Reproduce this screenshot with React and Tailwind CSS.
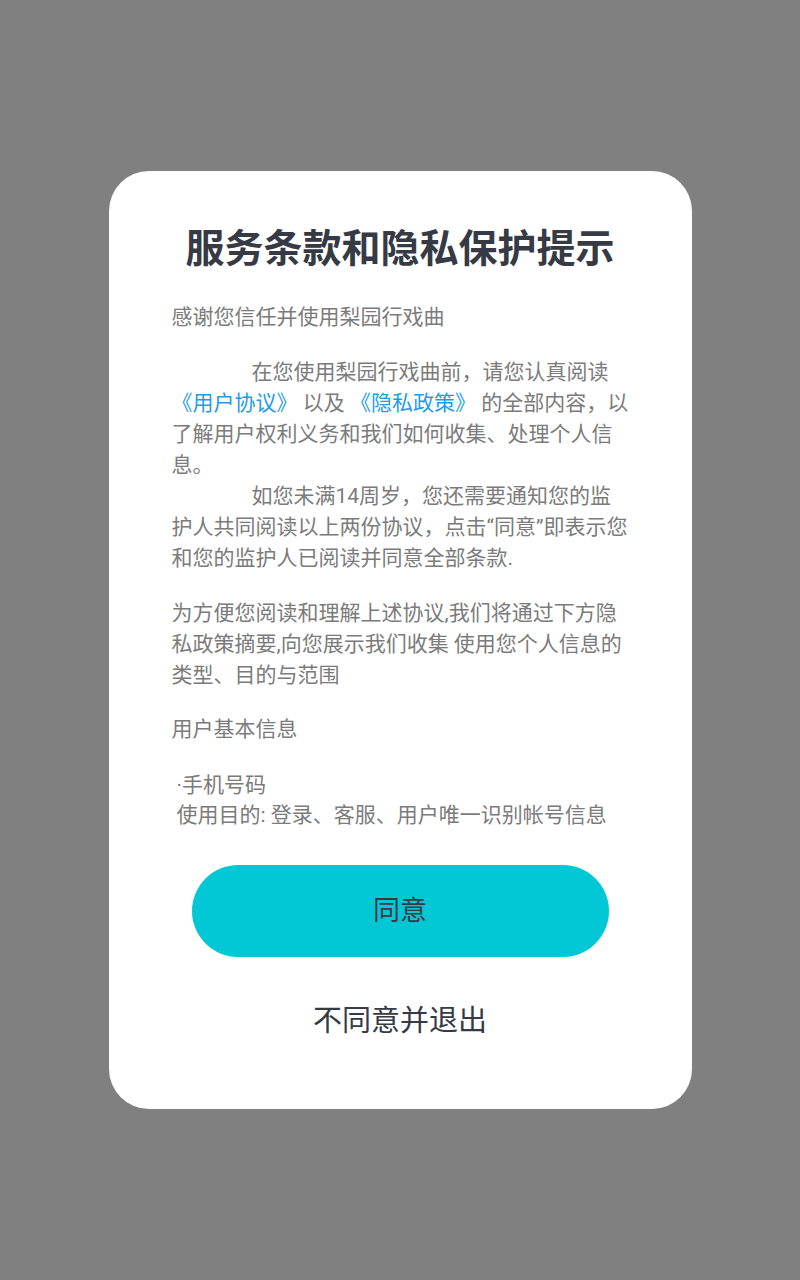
// Privacy consent dialog shown on first launch

const font = { fontFamily: 'Roboto, "Noto Sans CJK SC", sans-serif' };

export default function App() {
  return (
    <div
      className="min-h-screen w-full bg-[#808080] flex items-center justify-center"
      style={font}
    >
      <div className="w-[583px] bg-white rounded-[40px] px-[63px] pt-[52px] pb-[68px]">
        <h1 className="text-center text-[39px] leading-[52px] font-semibold text-[#363a45]">
          服务条款和隐私保护提示
        </h1>

        <div className="mt-[27px] text-[21px] leading-[31px] text-[#7b7b7b]">
          <p>感谢您信任并使用梨园行戏曲</p>

          <div className="mt-[24px]">
            <p className="indent-[80px]">
              在您使用梨园行戏曲前，请您认真阅读
              <span className="text-[#1e9be9]">《用户协议》</span> 以及{" "}
              <span className="text-[#1e9be9]">《隐私政策》</span>{" "}
              的全部内容，以了解用户权利义务和我们如何收集、处理个人信息。
            </p>
            <p className="indent-[80px]">
              如您未满14周岁，您还需要通知您的监护人共同阅读以上两份协议，点击“同意”即表示您和您的监护人已阅读并同意全部条款.
            </p>
          </div>

          <p className="mt-[24px]">
            为方便您阅读和理解上述协议,我们将通过下方隐私政策摘要,向您展示我们收集 使用您个人信息的类型、目的与范围
          </p>

          <p className="mt-[23px]">用户基本信息</p>

          <div className="mt-[25px] pl-[5px] leading-[30px]">
            <p>·手机号码</p>
            <p>使用目的: 登录、客服、用户唯一识别帐号信息</p>
          </div>
        </div>

        <button className="mt-[35px] mx-auto block w-[417px] h-[92px] rounded-full bg-[#02c8d6] text-[27px] text-[#363a45]">
          同意
        </button>

        <button className="mt-[44px] mx-auto block text-[29px] leading-[40px] text-[#363a45]">
          不同意并退出
        </button>
      </div>
    </div>
  );
}
